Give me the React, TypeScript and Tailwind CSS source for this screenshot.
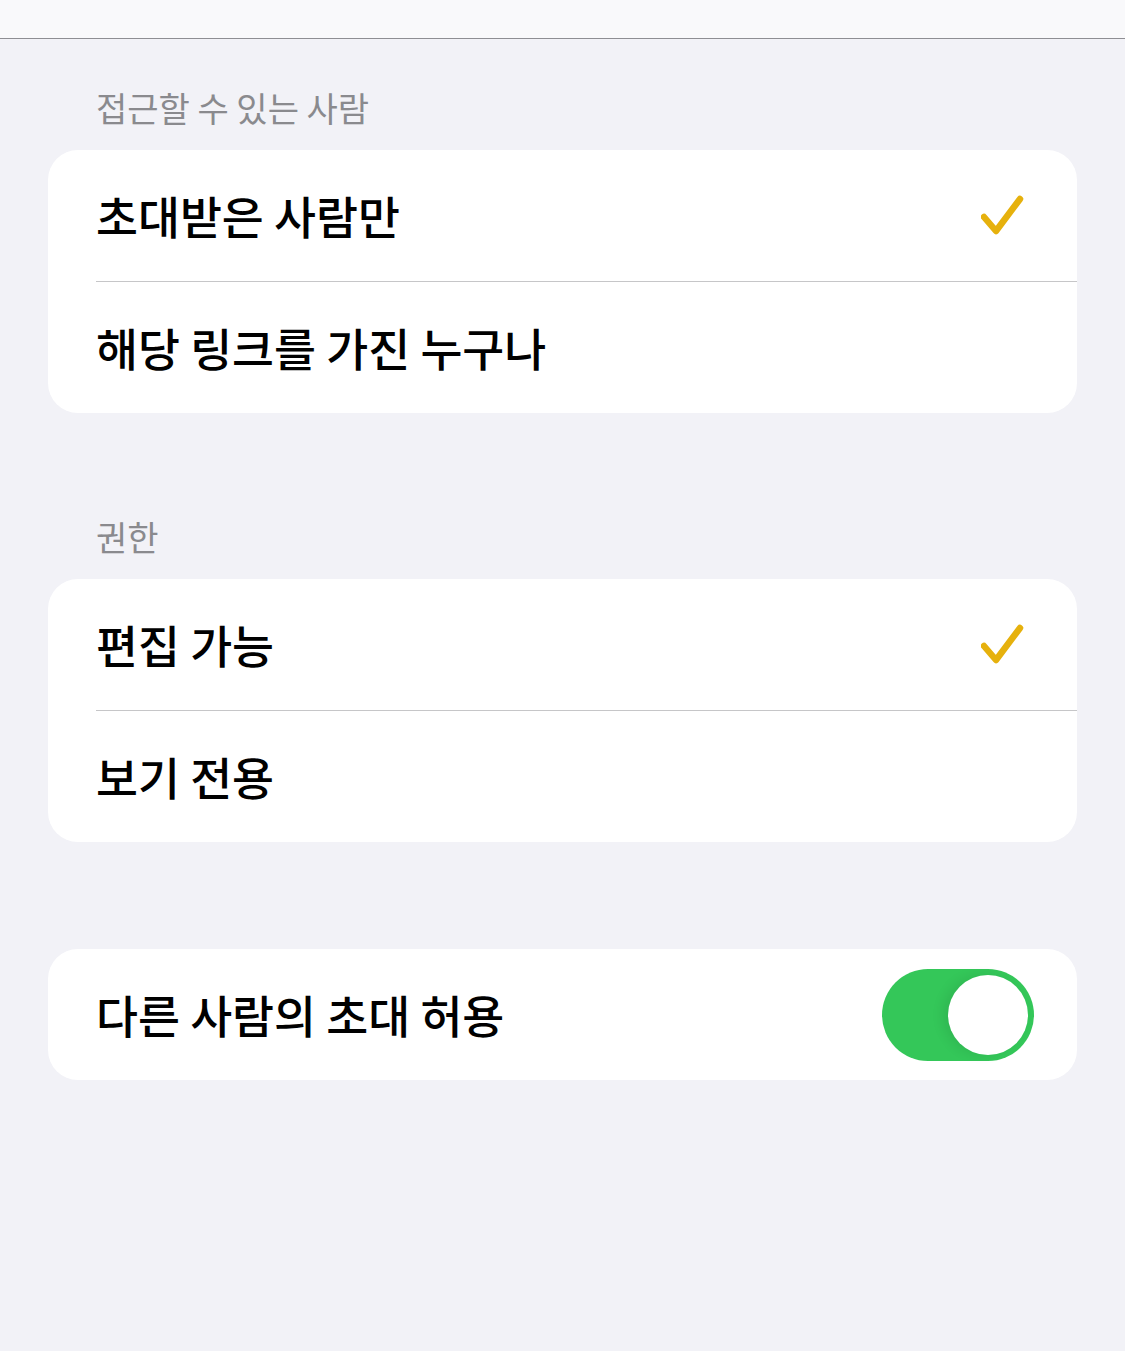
const font = { fontFamily: '"Noto Sans CJK KR", "Noto Sans", sans-serif' }

function Check() {
  return (
    <svg width="44" height="44" viewBox="0 0 44 44" className="shrink-0">
      <path d="M3 23 L15 37 L39 5" fill="none" stroke="#e6b10d" strokeWidth="6.5" strokeLinecap="round" strokeLinejoin="round" />
    </svg>
  )
}

function Row({ label, checked, last }: { label: string; checked?: boolean; last?: boolean }) {
  return (
    <div className="pl-12">
      <div className={`flex items-center justify-between pr-[52px] ${last ? 'h-[131px]' : 'h-[132px] border-b border-[#c6c6c8]'}`}>
        <span className="text-[45.6px] font-medium text-black leading-none">{label}</span>
        {checked && <Check />}
      </div>
    </div>
  )
}

export default function App() {
  return (
    <div className="min-h-[1351px] bg-[#f2f2f7]" style={font}>
      <div className="h-[39px] bg-[#f9f9fb] border-b border-[#8e8e93]" />

      <div className="px-12">
        <div className="pt-[45px] pb-[18px] pl-12 text-[34px] text-[#8a8a8e] leading-[48px]">접근할 수 있는 사람</div>
        <div className="bg-white rounded-[30px] overflow-hidden">
          <Row label="초대받은 사람만" checked />
          <Row label="해당 링크를 가진 누구나" last />
        </div>

        <div className="pt-[100px] pb-[18px] pl-12 text-[34px] text-[#8a8a8e] leading-[48px]">권한</div>
        <div className="bg-white rounded-[30px] overflow-hidden">
          <Row label="편집 가능" checked />
          <Row label="보기 전용" last />
        </div>

        <div className="mt-[107px] bg-white rounded-[30px] h-[131px] flex items-center justify-between pl-12 pr-[43px]">
          <span className="text-[45.6px] font-medium text-black leading-none">다른 사람의 초대 허용</span>
          <div className="w-[152px] h-[92px] rounded-full bg-[#34c759] flex items-center justify-end pr-[6px]">
            <div className="w-[80px] h-[80px] rounded-full bg-white shadow-[-6px_0_12px_rgba(0,0,0,0.08)]" />
          </div>
        </div>
      </div>
    </div>
  )
}
